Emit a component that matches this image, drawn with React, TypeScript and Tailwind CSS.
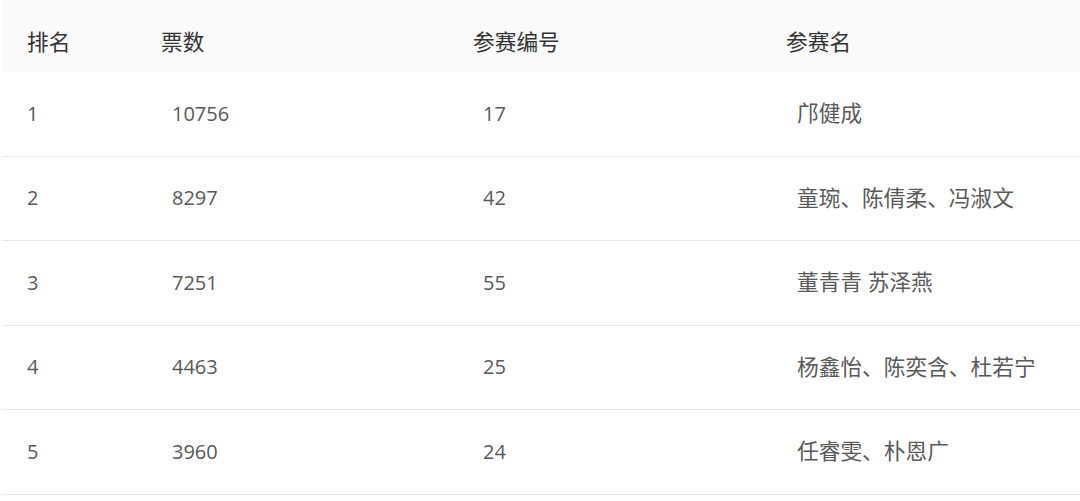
const rows = [
  { rank: "1", votes: "10756", no: "17", name: "邝健成" },
  { rank: "2", votes: "8297", no: "42", name: "童琬、陈倩柔、冯淑文" },
  { rank: "3", votes: "7251", no: "55", name: "董青青 苏泽燕" },
  { rank: "4", votes: "4463", no: "25", name: "杨鑫怡、陈奕含、杜若宁" },
  { rank: "5", votes: "3960", no: "24", name: "任睿雯、朴恩广" },
];

const cols = "grid grid-cols-[134px_312px_313px_1fr]";

export default function App() {
  return (
    <div
      className="w-[1080px] h-[501px] bg-white overflow-hidden pl-[2px]"
      style={{ fontFamily: '"Open Sans", "Noto Sans CJK SC", sans-serif' }}
    >
      <div className={`${cols} h-[72px] pt-[12px] bg-[#fafafa] text-[21.7px] text-[#333] items-center`}>
        <div className="pl-[25px]">排名</div>
        <div className="pl-[25px]">票数</div>
        <div className="pl-[25px]">参赛编号</div>
        <div className="pl-[25px]">参赛名</div>
      </div>
      {rows.map((r) => (
        <div
          key={r.rank}
          className={`${cols} h-[84.5px] items-center border-b border-[#e8e8e8] text-[20px] text-[#595959]`}
        >
          <div className="pl-[25px]">{r.rank}</div>
          <div className="pl-[36px]">{r.votes}</div>
          <div className="pl-[35px]">{r.no}</div>
          <div className="pl-[36px] text-[21.7px]">{r.name}</div>
        </div>
      ))}
    </div>
  );
}
